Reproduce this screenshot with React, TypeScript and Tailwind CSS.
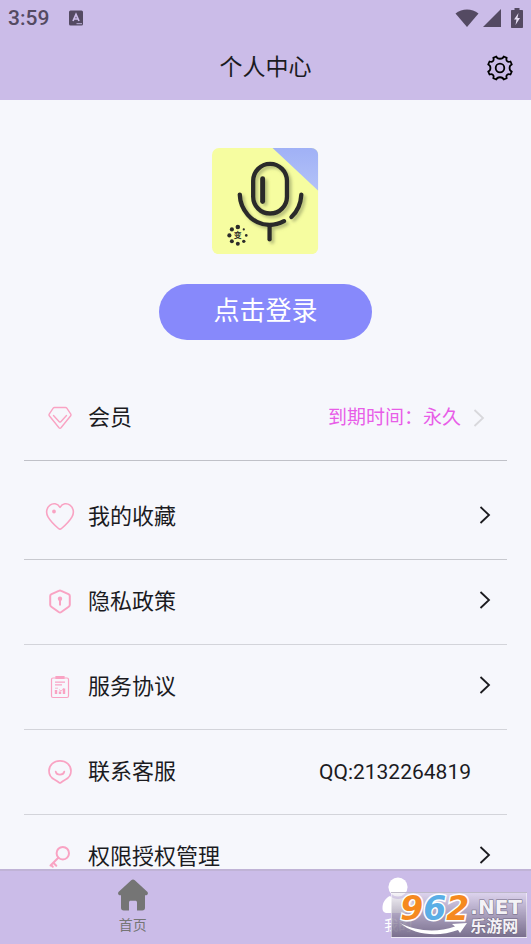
import React, { useState } from 'react';

type IconProps = { className?: string };

const GearIcon: React.FC<IconProps> = ({ className }) => (
  <svg viewBox="0 0 26 26" className={className} fill="none" stroke="currentColor" strokeWidth="1.8" strokeLinejoin="round">
    <path d="M9.300 1.500c.9 3 6.500 3 7.400 0l3 1.300c-1.100 2.900.9 4.900 3.800 3.700l1.300 3c-3 1.100-3 5.900 0 7l-1.300 3c-2.900-1.200-4.900.8-3.800 3.700l-3 1.300c-.9-3-6.500-3-7.400 0l-3-1.300c1.100-2.900-.9-4.900-3.800-3.700l-1.300-3c3-1.100 3-5.900 0-7l1.300-3c2.900 1.200 4.900-.8 3.800-3.700z" />
    <circle cx="13" cy="13" r="4.300" />
  </svg>
);

const DiamondIcon = () => (
  <svg viewBox="0 0 26 26" className="size-6.5" fill="none" stroke="#f9a3c3" strokeWidth="1.4" strokeLinejoin="round" strokeLinecap="round">
    <path d="M7.500 2.500h11c.6 0 1 .2 1.300.6l4 6c.4.6.3 1.200-.1 1.700L14 22.800c-.6.7-1.400.7-2 0L2.300 10.800c-.4-.5-.5-1.100-.1-1.700l4-6c.3-.4.700-.6 1.300-.6z" />
    <path d="M6.500 10.500l5.700 6.200c.5.5 1.100.5 1.600 0l5.700-6.200" />
  </svg>
);

const HeartIcon = () => (
  <svg viewBox="0 0 30 30" className="size-7.5 shrink-0" fill="none" stroke="#f9a3c3" strokeWidth="1.6" strokeLinejoin="round">
    <path d="M15 5.300C12.500 1.200 8 .8 5 3.200 1.300 6 .7 11 3 14.800c2.300 4 6.500 8.200 10.500 11.700 1 .9 2 .9 3 0 4-3.500 8.200-7.700 10.500-11.700C29.300 11 28.700 6 25 3.200c-3-2.400-7.500-2-10 2.100z" />
    <circle cx="9" cy="9.500" r="1.100" fill="#f9a3c3" />
  </svg>
);

const ShieldIcon = () => (
  <svg viewBox="0 0 26 26" className="size-6.5" fill="none" stroke="#f9a3c3" strokeWidth="2" strokeLinejoin="round">
    <path d="M11.800 1.800c.8-.4 1.600-.4 2.400 0l7.300 3.400c.9.400 1.300 1 1.300 1.900v8.600c0 .8-.4 1.500-1.100 2l-7.400 5.300c-.9.600-1.700.6-2.600 0l-7.400-5.300c-.7-.5-1.100-1.200-1.100-2V7.100c0-.9.400-1.500 1.300-1.900z" />
    <circle cx="13" cy="9.800" r="2.200" fill="#f9a3c3" stroke="none" />
    <path d="M13 10v6.500" />
  </svg>
);

const ReportIcon = () => (
  <svg viewBox="0 0 24 24" className="size-6" fill="none" stroke="#f9a3c3" strokeWidth="1.200">
    <rect x="3.500" y="3" width="17" height="19.500" rx="1.500" />
    <path d="M8 1.500h8v2H8z" fill="#f9a3c3" />
    <path d="M7 7.200h10M7 9.800h7" />
    <path d="M8 19v-4M12 19v-2.500M16 19v-5.500" strokeWidth="2.400" />
    <path d="M7 13.200h3M11 14.500l2 1.500 3-2.500" strokeWidth="0.800" />
  </svg>
);

const ServiceIcon = () => (
  <svg viewBox="0 0 26 26" className="size-6.5" fill="none" stroke="#f9a3c3" strokeWidth="1.700" strokeLinejoin="round" strokeLinecap="round">
    <path d="M12 23.500c-1.500-1.300-3-2.100-4.600-3C4 18.700 2 15.800 2 12 2 6 7 1.800 13 1.800S24 6 24 12c0 3.800-2 6.700-5.400 8.500-1.600.9-3.100 1.700-4.600 3-.7.500-1.300.5-2 0z" />
    <path d="M8.700 12.500c.8 4.200 7.800 4.200 8.600 0" />
  </svg>
);

const KeyIcon = () => (
  <svg viewBox="0 0 26 26" className="size-6.5" fill="none" stroke="#f9a3c3" strokeWidth="2" strokeLinecap="round">
    <circle cx="15.800" cy="9.200" r="6.200" />
    <path d="M11.300 13.800L3.500 21.500M6.300 18.800l3 3M4 21l1.800 1.800" />
  </svg>
);

const Chevron: React.FC<IconProps> = ({ className }) => (
  <svg viewBox="0 0 12 20" className={className} fill="none" stroke="currentColor" strokeWidth="1.800">
    <path d="M1.500 2l8.500 8-8.500 8" />
  </svg>
);

const MicLogo = () => (
  <svg viewBox="0 0 107 107" className="w-[22%]" role="img" aria-label="logo">
    <defs>
      <clipPath id="card"><rect width="107" height="107" rx="7" /></clipPath>
      <linearGradient id="corner" x1="0" y1="0" x2="0" y2="1">
        <stop offset="0" stopColor="#a0b1f6" />
        <stop offset="1" stopColor="#b3c2f8" />
      </linearGradient>
      <filter id="soft" x="-20%" y="-20%" width="150%" height="150%">
        <feDropShadow dx="2.500" dy="2.500" stdDeviation="1.800" floodColor="#8b9560" floodOpacity="0.600" />
      </filter>
    </defs>
    <g clipPath="url(#card)">
      <rect width="107" height="107" fill="#f6fda0" />
      <path d="M61 0h46v43z" fill="url(#corner)" />
    </g>
    <g fill="none" stroke="#2c2c2a" strokeWidth="4.400" strokeLinecap="round" filter="url(#soft)">
      <rect x="41.500" y="16" width="34" height="50" rx="17" />
      <path d="M51 31v23" strokeWidth="5" />
      <path d="M28 47c.5 14 11 30 30 30.500 5.500 0 10.500-1.500 14.500-3.800" />
      <path d="M90 47c-.5 9-4 17-10 22.500" />
      <path d="M58 78v14" />
    </g>
    <g fill="#2c2c2a">
      <circle cx="26" cy="79.500" r="2.300" />
      <circle cx="20" cy="82" r="2.100" />
      <circle cx="17.500" cy="88" r="2.100" />
      <circle cx="20" cy="94" r="2" />
      <circle cx="26" cy="96.500" r="2" />
      <circle cx="32" cy="94" r="1.700" />
      <circle cx="34.500" cy="88" r="1.300" />
      <circle cx="32" cy="82" r="1.100" />
      <text x="26" y="91" textAnchor="middle" fontSize="8" fontWeight="700">变</text>
    </g>
  </svg>
);

const HomeIcon = () => (
  <svg viewBox="0 0 32 32" className="size-8" fill="#757575">
    <path d="M14.200 1.200c1-.9 2.600-.9 3.600 0L30 12.500c1.700 1.600.9 3.800-1.500 3.800H28v12.500c0 1.800-1 2.700-2.700 2.700H20v-8c0-1.200-.6-1.800-1.800-1.800h-4.400c-1.200 0-1.800.6-1.800 1.800v8H6.700C5 31.500 4 30.600 4 28.800V16.300h-.5c-2.400 0-3.200-2.200-1.500-3.800z" />
  </svg>
);

const UserIcon = () => (
  <svg viewBox="0 0 36 36" className="size-9" fill="#ffffff">
    <circle cx="18" cy="10" r="9.600" />
    <path d="M10 19c2 2 5 3 8 3s6-1 8-3c4.500 2 7.500 6.500 7.500 12 0 3.500-1.500 5-5 5h-21c-3.500 0-5-1.500-5-5 0-5.500 3-10 7.500-12z" />
  </svg>
);

const MENU = [
  { label: '我的收藏', icon: HeartIcon, first: true },
  { label: '隐私政策', icon: ShieldIcon },
  { label: '服务协议', icon: ReportIcon },
  { label: '联系客服', icon: ServiceIcon, value: 'QQ:2132264819' },
  { label: '权限授权管理', icon: KeyIcon },
];

const StatusBar = () => (
  <div className="flex h-9 items-center justify-between px-2 text-[#544a62]">
    <div className="flex items-center gap-5">
      <span className="text-[21px] leading-6 font-medium">3:59</span>
      <svg viewBox="0 0 14 15" className="h-4 w-3.5">
        <rect width="14" height="15" rx="1.500" fill="currentColor" />
        <path d="M4 10.500L7 3.800l3 6.700M5 8.500h4" stroke="#cbbce8" strokeWidth="1.700" fill="none" />
        <path d="M7.500 13.200H13" stroke="#cbbce8" strokeWidth="0.900" />
      </svg>
    </div>
    <div className="flex items-center gap-1">
      <svg viewBox="0 0 24 18" className="h-4.5 w-6" fill="currentColor">
        <path d="M12 18L.5 4.500C7-.8 17-.8 23.500 4.500z" />
      </svg>
      <svg viewBox="0 0 17 17" className="size-4.5" fill="currentColor">
        <path d="M17 0v17H0z" />
      </svg>
      <svg viewBox="0 0 12 20" className="ml-1.5 h-5 w-3">
        <path d="M3.500 0h5v2H11c.6 0 1 .4 1 1v16c0 .6-.4 1-1 1H1c-.6 0-1-.4-1-1V3c0-.6.4-1 1-1h2.500z" fill="currentColor" />
        <path d="M7.500 5L3 11.500h2.500L4.500 17 9 10H6.500z" fill="#e6def4" />
      </svg>
    </div>
  </div>
);

const Watermark = () => (
  <div className="absolute right-1 bottom-1.5 flex h-11.5 items-start border border-white/50 bg-linear-to-b from-[#eeeaf2]/50 to-[#716784]/90 pr-1 pl-2">
    <div className="flex w-17.5 flex-col">
      <span className="font-['DejaVu_Sans',sans-serif] text-[33px] leading-8 font-bold italic [-webkit-text-stroke:3px_white] [paint-order:stroke_fill]">
        <span className="text-[#f58a1f]">9</span>
        <span className="text-[#5aaee6]">6</span>
        <span className="text-[#f58a1f]">2</span>
      </span>
      <svg viewBox="0 0 68 12" className="-mt-0.5 h-3 w-17">
        <path d="M0 0c16 8 36 10 55 3.500l-3-2.500 15-1-7 10-2-3C38 14.500 14 12 0 0z" fill="#ffffff" />
      </svg>
    </div>
    <div className="flex flex-col pt-1 text-[#f4f2f6] [-webkit-text-stroke:1px_#6f6680] [paint-order:stroke_fill]">
      <span className="font-['DejaVu_Sans',sans-serif] text-[20px] leading-5 font-bold">.NET</span>
      <span className="text-[16px] leading-5 font-bold">乐游网</span>
    </div>
  </div>
);

const App: React.FC = () => {
  const [tab, setTab] = useState<'home' | 'mine'>('mine');

  return (
    <div className="relative flex h-screen flex-col bg-[#f6f7fc] font-[Roboto,'Noto_Sans_CJK_SC',sans-serif] text-[#1b1b1f]">
      <header className="shrink-0 bg-[#cbbce8]">
        <StatusBar />
        <div className="grid h-16 grid-cols-[1fr_auto_1fr] items-center px-4.5">
          <h1 className="col-start-2 text-[23px] leading-8">个人中心</h1>
          <button aria-label="设置" className="justify-self-end text-black">
            <GearIcon className="size-6.5" />
          </button>
        </div>
      </header>

      <main className="min-h-0 flex-1 overflow-hidden px-6">
        <section className="flex flex-col items-center pt-12">
          <MicLogo />
          <button className="mt-7.5 h-14 w-[44%] rounded-full bg-[#8789fb] pb-0.5 text-[26px] leading-8 text-white">
            点击登录
          </button>
        </section>

        <ul className="mt-9">
          <li className="border-b border-[#c0c1c8]">
            <button className="flex h-21 w-full items-center pr-5.5 pl-5.5">
              <span className="flex w-7 justify-center"><DiamondIcon /></span>
              <span className="ml-3.5 text-[22px] leading-8">会员</span>
              <span className="ml-auto text-[19px] leading-7 text-[#e85de8]">到期时间：永久</span>
              <Chevron className="ml-3 h-5 w-3 text-[#d8d8dc]" />
            </button>
          </li>
          {MENU.map(({ label, icon: Icon, value, first }) => (
            <li key={label} className={first ? 'border-b border-[#c8c9cf] pt-3.5' : 'border-b border-[#d3d4da]'}>
              <button className="flex h-21 w-full items-center pr-4 pl-5.5">
                <span className="flex w-7 shrink-0 justify-center"><Icon /></span>
                <span className="ml-3.5 text-[22px] leading-8">{label}</span>
                {value ? (
                  <span className="mr-5 ml-auto text-[21px] leading-8">{value}</span>
                ) : (
                  <Chevron className="mb-1 ml-auto h-5 w-3" />
                )}
              </button>
            </li>
          ))}
        </ul>
      </main>

      <nav className="grid h-[75px] shrink-0 grid-cols-2 border-t-2 border-[#c0b3d6] bg-[#cbbce8]">
        <button onClick={() => setTab('home')} aria-pressed={tab === 'home'} className="flex flex-col items-center pt-2 text-[#757575]">
          <HomeIcon />
          <span className="mt-1 text-[14px] leading-5">首页</span>
        </button>
        <button onClick={() => setTab('mine')} aria-pressed={tab === 'mine'} className="flex flex-col items-center pt-1.5 text-white">
          <UserIcon />
          <span className="mt-0.5 text-[14px] leading-5">我的</span>
        </button>
      </nav>

      <Watermark />
    </div>
  );
};

export default App;
